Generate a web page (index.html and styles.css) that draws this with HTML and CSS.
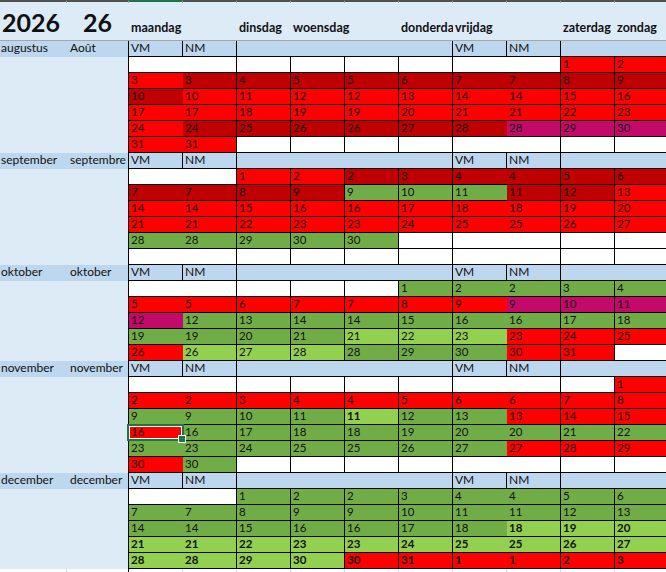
FILE: index.html
```html
<!DOCTYPE html>
<html lang="nl">
<head>
<meta charset="utf-8">
<title>Kalender 2026</title>
<link rel="stylesheet" href="styles.css">
</head>
<body>
<div class="sheet">
  <!-- column header strip -->
  <div class="t"></div><div class="t"></div><div class="t sel-col"></div><div class="t"></div><div class="t"></div><div class="t"></div><div class="t"></div><div class="t"></div><div class="t"></div><div class="t"></div><div class="t"></div><div class="t"></div>

  <!-- title row -->
  <div class="h yr">2026</div>
  <div class="h wk">26</div>
  <div class="h dn">maandag</div>
  <div class="h dn"></div>
  <div class="h dn">dinsdag</div>
  <div class="h dn s2">woensdag</div>
  <div class="h dn">donderdag</div>
  <div class="h dn s2">vrijdag</div>
  <div class="h dn">zaterdag</div>
  <div class="h dn">zondag</div>

  <!-- augustus -->
  <div class="ma">augustus</div><div class="mb">Août</div><div class="hv">VM</div><div class="hv">NM</div><div class="hs s4"></div><div class="hv">VM</div><div class="hv">NM</div><div class="hs s2"></div>
  <div class="la"></div><div class="lb"></div><div class="c p"></div><div class="c"></div><div class="c"></div><div class="c"></div><div class="c"></div><div class="c"></div><div class="c p"></div><div class="c"></div><div class="c r">1</div><div class="c r">2</div>
  <div class="la"></div><div class="lb"></div><div class="c r p">3</div><div class="c d">3</div><div class="c d">4</div><div class="c d">5</div><div class="c d">5</div><div class="c d">6</div><div class="c d p">7</div><div class="c d">7</div><div class="c d">8</div><div class="c d">9</div>
  <div class="la"></div><div class="lb"></div><div class="c d p">10</div><div class="c r">10</div><div class="c r">11</div><div class="c r">12</div><div class="c r">12</div><div class="c r">13</div><div class="c r p">14</div><div class="c r">14</div><div class="c r">15</div><div class="c r">16</div>
  <div class="la"></div><div class="lb"></div><div class="c r p">17</div><div class="c r">17</div><div class="c r">18</div><div class="c r">19</div><div class="c r">19</div><div class="c r">20</div><div class="c r p">21</div><div class="c r">21</div><div class="c r">22</div><div class="c r">23</div>
  <div class="la"></div><div class="lb"></div><div class="c r p">24</div><div class="c d">24</div><div class="c d">25</div><div class="c d">26</div><div class="c d">26</div><div class="c d">27</div><div class="c d p">28</div><div class="c m">28</div><div class="c m">29</div><div class="c m">30</div>
  <div class="la"></div><div class="lb"></div><div class="c r p">31</div><div class="c r">31</div><div class="c"></div><div class="c"></div><div class="c"></div><div class="c"></div><div class="c p"></div><div class="c"></div><div class="c"></div><div class="c"></div>

  <!-- september -->
  <div class="ma">september</div><div class="mb">septembre</div><div class="hv">VM</div><div class="hv">NM</div><div class="hs s4"></div><div class="hv">VM</div><div class="hv">NM</div><div class="hs s2"></div>
  <div class="la"></div><div class="lb"></div><div class="c p"></div><div class="c"></div><div class="c r">1</div><div class="c r">2</div><div class="c d">2</div><div class="c d">3</div><div class="c d p">4</div><div class="c d">4</div><div class="c d">5</div><div class="c d">6</div>
  <div class="la"></div><div class="lb"></div><div class="c d p">7</div><div class="c d">7</div><div class="c d">8</div><div class="c d">9</div><div class="c g">9</div><div class="c g">10</div><div class="c g p">11</div><div class="c d">11</div><div class="c d">12</div><div class="c r">13</div>
  <div class="la"></div><div class="lb"></div><div class="c r p">14</div><div class="c r">14</div><div class="c r">15</div><div class="c r">16</div><div class="c r">16</div><div class="c r">17</div><div class="c r p">18</div><div class="c r">18</div><div class="c r">19</div><div class="c r">20</div>
  <div class="la"></div><div class="lb"></div><div class="c r p">21</div><div class="c r">21</div><div class="c r">22</div><div class="c r">23</div><div class="c r">23</div><div class="c r">24</div><div class="c r p">25</div><div class="c r">25</div><div class="c r">26</div><div class="c r">27</div>
  <div class="la"></div><div class="lb"></div><div class="c g p">28</div><div class="c g">28</div><div class="c g">29</div><div class="c g">30</div><div class="c g">30</div><div class="c"></div><div class="c p"></div><div class="c"></div><div class="c"></div><div class="c"></div>
  <div class="la"></div><div class="lb"></div><div class="c p"></div><div class="c"></div><div class="c"></div><div class="c"></div><div class="c"></div><div class="c"></div><div class="c p"></div><div class="c"></div><div class="c"></div><div class="c"></div>

  <!-- oktober -->
  <div class="ma">oktober</div><div class="mb">oktober</div><div class="hv">VM</div><div class="hv">NM</div><div class="hs s4"></div><div class="hv">VM</div><div class="hv">NM</div><div class="hs s2"></div>
  <div class="la"></div><div class="lb"></div><div class="c p"></div><div class="c"></div><div class="c"></div><div class="c"></div><div class="c"></div><div class="c g">1</div><div class="c g p">2</div><div class="c g">2</div><div class="c g">3</div><div class="c g">4</div>
  <div class="la"></div><div class="lb"></div><div class="c r p">5</div><div class="c r">5</div><div class="c r">6</div><div class="c r">7</div><div class="c r">7</div><div class="c r">8</div><div class="c r p">9</div><div class="c m">9</div><div class="c m">10</div><div class="c m">11</div>
  <div class="la"></div><div class="lb"></div><div class="c m p">12</div><div class="c g">12</div><div class="c g">13</div><div class="c g">14</div><div class="c g">14</div><div class="c g">15</div><div class="c g p">16</div><div class="c g">16</div><div class="c g">17</div><div class="c g">18</div>
  <div class="la"></div><div class="lb"></div><div class="c g p">19</div><div class="c g">19</div><div class="c g">20</div><div class="c g">21</div><div class="c l">21</div><div class="c l">22</div><div class="c l p">23</div><div class="c r">23</div><div class="c r">24</div><div class="c r">25</div>
  <div class="la"></div><div class="lb"></div><div class="c r p">26</div><div class="c l">26</div><div class="c l">27</div><div class="c l">28</div><div class="c g">28</div><div class="c g">29</div><div class="c g p">30</div><div class="c r">30</div><div class="c r">31</div><div class="c"></div>

  <!-- november -->
  <div class="ma">november</div><div class="mb">november</div><div class="hv">VM</div><div class="hv">NM</div><div class="hs s4"></div><div class="hv">VM</div><div class="hv">NM</div><div class="hs s2"></div>
  <div class="la"></div><div class="lb"></div><div class="c p"></div><div class="c"></div><div class="c"></div><div class="c"></div><div class="c"></div><div class="c"></div><div class="c p"></div><div class="c"></div><div class="c"></div><div class="c r">1</div>
  <div class="la"></div><div class="lb"></div><div class="c r p">2</div><div class="c r">2</div><div class="c r">3</div><div class="c r">4</div><div class="c r">4</div><div class="c r">5</div><div class="c r p">6</div><div class="c r">6</div><div class="c r">7</div><div class="c r">8</div>
  <div class="la"></div><div class="lb"></div><div class="c g p">9</div><div class="c g">9</div><div class="c g">10</div><div class="c g">11</div><div class="c l b">11</div><div class="c g">12</div><div class="c g p">13</div><div class="c r">13</div><div class="c r">14</div><div class="c r">15</div>
  <div class="la"></div><div class="lb"></div><div class="c r p sel">16</div><div class="c g">16</div><div class="c g">17</div><div class="c g">18</div><div class="c g">18</div><div class="c g">19</div><div class="c g p">20</div><div class="c g">20</div><div class="c g">21</div><div class="c g">22</div>
  <div class="la"></div><div class="lb"></div><div class="c g p">23</div><div class="c g">23</div><div class="c g">24</div><div class="c g">25</div><div class="c g">25</div><div class="c g">26</div><div class="c g p">27</div><div class="c r">27</div><div class="c r">28</div><div class="c r">29</div>
  <div class="la"></div><div class="lb"></div><div class="c r p">30</div><div class="c g">30</div><div class="c"></div><div class="c"></div><div class="c"></div><div class="c"></div><div class="c p"></div><div class="c"></div><div class="c"></div><div class="c"></div>

  <!-- december -->
  <div class="ma">december</div><div class="mb">december</div><div class="hv">VM</div><div class="hv">NM</div><div class="hs s4"></div><div class="hv">VM</div><div class="hv">NM</div><div class="hs s2"></div>
  <div class="la"></div><div class="lb"></div><div class="c p"></div><div class="c"></div><div class="c g">1</div><div class="c g">2</div><div class="c g">2</div><div class="c g">3</div><div class="c g p">4</div><div class="c g">4</div><div class="c g">5</div><div class="c g">6</div>
  <div class="la"></div><div class="lb"></div><div class="c g p">7</div><div class="c g">7</div><div class="c g">8</div><div class="c g">9</div><div class="c g">9</div><div class="c g">10</div><div class="c g p">11</div><div class="c g">11</div><div class="c g">12</div><div class="c g">13</div>
  <div class="la"></div><div class="lb"></div><div class="c g p">14</div><div class="c g">14</div><div class="c g">15</div><div class="c g">16</div><div class="c g">16</div><div class="c g">17</div><div class="c g p">18</div><div class="c l b">18</div><div class="c l b">19</div><div class="c l b">20</div>
  <div class="la"></div><div class="lb"></div><div class="c l b p">21</div><div class="c l b">21</div><div class="c l b">22</div><div class="c l b">23</div><div class="c l b">23</div><div class="c l b">24</div><div class="c l b p">25</div><div class="c l b">25</div><div class="c l b">26</div><div class="c l b">27</div>
  <div class="la"></div><div class="lb"></div><div class="c l b p">28</div><div class="c l b">28</div><div class="c l b">29</div><div class="c l b">30</div><div class="c r b">30</div><div class="c r b">31</div><div class="c r b p">1</div><div class="c r b">1</div><div class="c r b">2</div><div class="c r b">3</div>

  <!-- empty grid row -->
  <div class="e"></div><div class="e eb"></div><div class="e"></div><div class="e"></div><div class="e"></div><div class="e"></div><div class="e"></div><div class="e"></div><div class="e"></div><div class="e"></div><div class="e"></div><div class="e"></div>
</div>
</body>
</html>
```

FILE: styles.css
```css
* { box-sizing: border-box; }

html, body {
  margin: 0;
  padding: 0;
}

body {
  width: 666px;
  height: 572px;
  overflow: hidden;
  background: #ffffff;
  font-family: Lato, "Open Sans", sans-serif;
  color: #111111;
}

.sheet {
  display: grid;
  grid-template-columns: 67px 62px repeat(10, 54px);
  grid-template-rows: 3px 38px;
  grid-auto-rows: 16px;
  width: 669px;
}

/* column header strip */
.t {
  background: #ddebf7;
  border-top: 2px solid #505050;
  border-right: 1px solid #a8a8a8;
}
.t.sel-col { border-top-color: #217346; }

/* title row */
.h {
  background: #ddebf7;
  border-bottom: 1px solid #a6a6a6;
  display: flex;
  align-items: flex-end;
  white-space: nowrap;
  overflow: hidden;
  font-weight: 700;
}
.yr, .wk {
  font-size: 25px;
  line-height: 28px;
  padding-bottom: 4px;
}
.yr { padding-left: 2px; }
.wk { padding-left: 16px; }
.dn {
  font-size: 12.5px;
  line-height: 15px;
  padding: 0 0 5px 2px;
}
.s2 { grid-column: span 2; }
.s4 { grid-column: span 4; }

/* month header row */
.ma, .mb, .hv, .hs {
  background: #bdd7ee;
  font-size: 12px;
  line-height: 13px;
  white-space: nowrap;
  overflow: hidden;
}
.ma { padding-left: 1px; }
.mb { padding-left: 3px; border-right: 1px solid #000; }
.hv, .hs {
  border-right: 1px solid #000;
  border-bottom: 1px solid #000;
  padding-left: 2px;
}

/* side columns in data rows */
.la { background: #ddebf7; }
.lb { background: #ddebf7; border-right: 1px solid #000; }

/* day cells */
.c {
  background: #ffffff;
  border-right: 1px solid #000;
  border-bottom: 1px solid #000;
  padding-left: 2px;
  font-size: 11.5px;
  line-height: 13px;
  white-space: nowrap;
  overflow: hidden;
}
.c.p { border-right: 0; }
.r { background: #ff0000; }
.d { background: #c00000; }
.m { background: #c5096b; }
.g { background: #70ad47; }
.l { background: #92d050; }
.b { font-weight: 700; }

/* active cell */
.sel {
  position: relative;
  overflow: visible;
}
.sel::after {
  content: "";
  position: absolute;
  left: -2px;
  top: -1px;
  right: -1px;
  bottom: -1px;
  border: 2px solid #217346;
  box-shadow: inset 0 0 0 1px #ffffff;
}
.sel::before {
  content: "";
  position: absolute;
  right: -3px;
  bottom: -3px;
  width: 6px;
  height: 6px;
  background: #217346;
  border: 1px solid #ffffff;
  z-index: 1;
}

/* empty row below */
.e {
  background: #ffffff;
  border-right: 1px solid #d9d9d9;
}
.e.eb { border-right-color: #000; }
```
